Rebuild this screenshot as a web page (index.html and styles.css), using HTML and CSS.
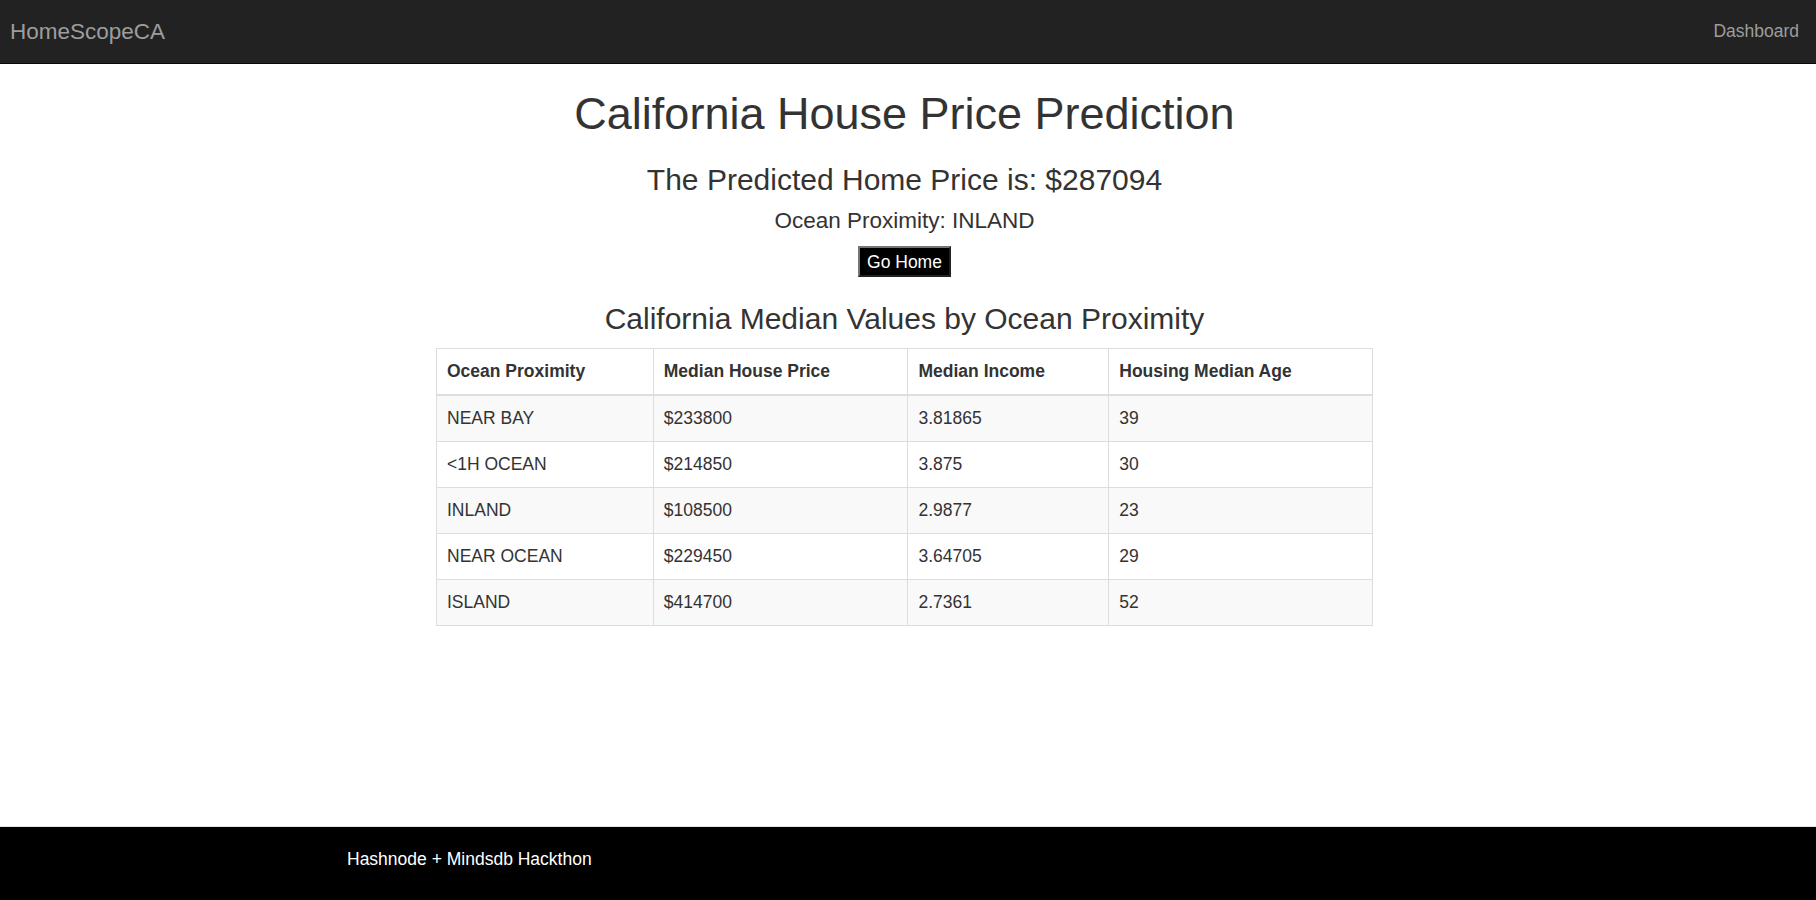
FILE: index.html
```html
<!DOCTYPE html>
<html lang="en">
<head>
<meta charset="utf-8">
<title>HomeScopeCA</title>
<link rel="stylesheet" href="styles.css">
</head>
<body>
<div class="page">
  <nav class="navbar">
    <a class="brand" href="#">HomeScopeCA</a>
    <a class="nav-link" href="#">Dashboard</a>
  </nav>
  <main class="main">
    <h1 class="title">California House Price Prediction</h1>
    <h3 class="price">The Predicted Home Price is: $287094</h3>
    <h4 class="prox">Ocean Proximity: INLAND</h4>
    <button class="btn-home">Go Home</button>
    <h3 class="subtitle">California Median Values by Ocean Proximity</h3>
    <table class="table">
      <thead>
        <tr>
          <th class="c1">Ocean Proximity</th>
          <th class="c2">Median House Price</th>
          <th class="c3">Median Income</th>
          <th class="c4">Housing Median Age</th>
        </tr>
      </thead>
      <tbody>
        <tr><td>NEAR BAY</td><td>$233800</td><td>3.81865</td><td>39</td></tr>
        <tr><td>&lt;1H OCEAN</td><td>$214850</td><td>3.875</td><td>30</td></tr>
        <tr><td>INLAND</td><td>$108500</td><td>2.9877</td><td>23</td></tr>
        <tr><td>NEAR OCEAN</td><td>$229450</td><td>3.64705</td><td>29</td></tr>
        <tr><td>ISLAND</td><td>$414700</td><td>2.7361</td><td>52</td></tr>
      </tbody>
    </table>
  </main>
  <footer class="footer">
    <span class="footer-text">Hashnode + Mindsdb Hackthon</span>
  </footer>
</div>
</body>
</html>
```

FILE: styles.css
```css
* { box-sizing: border-box; }
html, body { margin: 0; padding: 0; }
body {
  font-family: "Liberation Sans", Arial, Helvetica, sans-serif;
  font-size: 17.5px;
  line-height: 1.42857;
  color: #333;
  background: #fff;
}
.page {
  min-height: 900px;
  display: flex;
  flex-direction: column;
}
.navbar {
  height: 63.5px;
  background: #222;
  border-bottom: 1px solid #080808;
  display: flex;
  align-items: center;
  justify-content: space-between;
  padding: 0 17px 0 10px;
}
.brand {
  color: #9d9d9d;
  font-size: 22.5px;
  text-decoration: none;
  line-height: 25px;
}
.nav-link {
  color: #9d9d9d;
  font-size: 17.5px;
  text-decoration: none;
}
.main {
  flex: 1;
  display: flex;
  flex-direction: column;
  align-items: center;
  padding-right: 7px;
}
.title {
  font-size: 45px;
  font-weight: 500;
  line-height: 1.1;
  margin: 25px 0 12.5px;
}
.price {
  font-size: 30px;
  font-weight: 500;
  line-height: 1.1;
  margin: 12px 0 13.5px;
}
.prox {
  font-size: 22.5px;
  font-weight: 500;
  line-height: 1.1;
  margin: 0 0 12.5px;
}
.btn-home {
  font-family: "Liberation Sans", Arial, sans-serif;
  font-size: 17.5px;
  line-height: 20px;
  background: #000;
  color: #fff;
  border: 2px outset #767676;
  padding: 3px 7px 3px;
  width: 93px;
  height: 31px;
  margin: 0;
}
.subtitle {
  font-size: 30px;
  font-weight: 500;
  line-height: 1.1;
  margin: 25px 0 13px;
}
.table {
  width: 937px;
  border-collapse: collapse;
  border-spacing: 0;
  border: 1.25px solid #ddd;
  margin-bottom: 25px;
}
.table th, .table td {
  padding: 10px;
  line-height: 25px;
  text-align: left;
  border: 1.25px solid #ddd;
  vertical-align: top;
}
.table th {
  font-weight: bold;
  border-bottom: 2.5px solid #ddd;
}
.table tbody tr:nth-child(odd) { background: #f9f9f9; }
.c1 { width: 217px; }
.c2 { width: 255px; }
.c3 { width: 201px; }
.c4 { width: 264px; }
.footer {
  height: 74px;
  background: #000;
  border-top: 1px solid #e5e5e5;
  display: flex;
  align-items: flex-start;
  padding: 20px 0 0 347px;
}
.footer-text {
  color: #fff;
  font-size: 17.5px;
  line-height: 25px;
}
```
